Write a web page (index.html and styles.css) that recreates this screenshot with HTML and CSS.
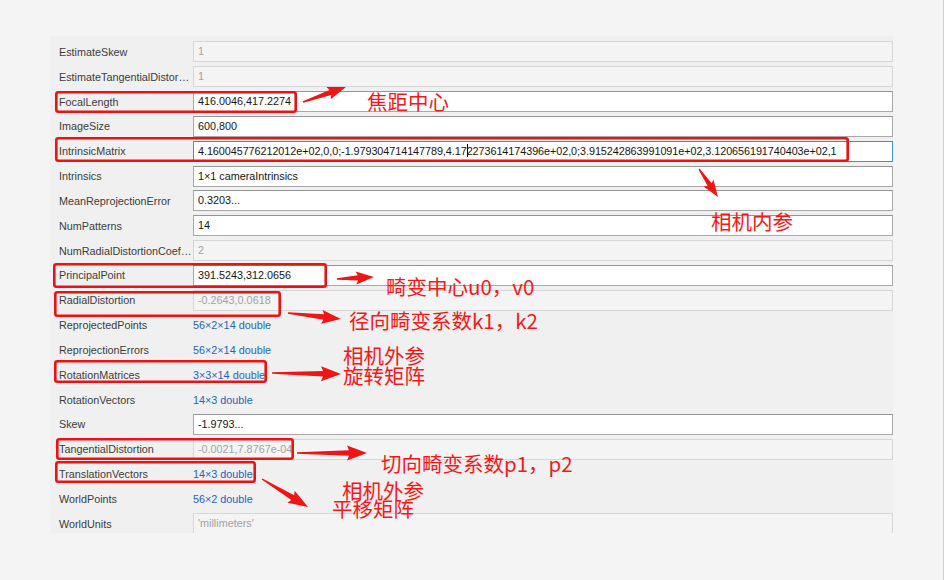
FILE: index.html
```html
<!DOCTYPE html>
<html>
<head>
<meta charset="utf-8">
<link rel="stylesheet" href="styles.css">
</head>
<body>
<div class="page">
  <div class="panel">
    <div class="row"><div class="label">EstimateSkew</div><div class="field disabled">1</div></div>
    <div class="row"><div class="label">EstimateTangentialDistor…</div><div class="field disabled">1</div></div>
    <div class="row"><div class="label">FocalLength</div><div class="field">416.0046,417.2274</div></div>
    <div class="row"><div class="label">ImageSize</div><div class="field">600,800</div></div>
    <div class="row"><div class="label">IntrinsicMatrix</div><div class="field focused">4.160045776212012e+02,0,0;-1.979304714147789,4.17<span class="caret"></span>2273614174396e+02,0;3.915242863991091e+02,3.120656191740403e+02,1</div></div>
    <div class="row"><div class="label">Intrinsics</div><div class="field">1×1 cameraIntrinsics</div></div>
    <div class="row"><div class="label">MeanReprojectionError</div><div class="field">0.3203...</div></div>
    <div class="row"><div class="label">NumPatterns</div><div class="field">14</div></div>
    <div class="row"><div class="label">NumRadialDistortionCoef…</div><div class="field disabled">2</div></div>
    <div class="row"><div class="label">PrincipalPoint</div><div class="field">391.5243,312.0656</div></div>
    <div class="row"><div class="label">RadialDistortion</div><div class="field disabled">-0.2643,0.0618</div></div>
    <div class="row"><div class="label">ReprojectedPoints</div><div class="link">56×2×14 double</div></div>
    <div class="row"><div class="label">ReprojectionErrors</div><div class="link">56×2×14 double</div></div>
    <div class="row"><div class="label">RotationMatrices</div><div class="link">3×3×14 double</div></div>
    <div class="row"><div class="label">RotationVectors</div><div class="link">14×3 double</div></div>
    <div class="row"><div class="label">Skew</div><div class="field">-1.9793...</div></div>
    <div class="row"><div class="label">TangentialDistortion</div><div class="field disabled">-0.0021,7.8767e-04</div></div>
    <div class="row"><div class="label">TranslationVectors</div><div class="link">14×3 double</div></div>
    <div class="row"><div class="label">WorldPoints</div><div class="link">56×2 double</div></div>
    <div class="row"><div class="label">WorldUnits</div><div class="field disabled">'millimeters'</div></div>
  </div>
</div>

<svg class="marks" width="944" height="580" viewBox="0 0 944 580">
  <g fill="none" stroke="#ee1111" stroke-width="2.6">
    <rect x="56.3" y="92.3" width="239.4" height="19.4" rx="2"/>
    <rect x="56.3" y="138.3" width="791.4" height="22.4" rx="2"/>
    <rect x="54.3" y="264.3" width="271.4" height="22.4" rx="2"/>
    <rect x="55.3" y="292.3" width="224.4" height="23.4" rx="2"/>
    <rect x="55.3" y="361.3" width="210.4" height="20.4" rx="2"/>
    <rect x="57.3" y="439.3" width="235.4" height="19.4" rx="2"/>
    <rect x="56.3" y="462.3" width="198.4" height="19.4" rx="2"/>
  </g>
  <g fill="#f01414">
    <polygon transform="translate(303 102) rotate(-19.2)" points="0,-0.7 29,-2.6 27,-6.5 45.5,0 27,6.5 29,2.6 0,0.7"/>
    <polygon transform="translate(699 169) rotate(55.8)" points="0,-0.7 19,-2.4 17,-6 33.8,0 17,6 19,2.4 0,0.7"/>
    <polygon transform="translate(337 279) rotate(-3.1)" points="0,-0.7 21,-2.6 19,-6.5 37,0 19,6.5 21,2.6 0,0.7"/>
    <polygon transform="translate(288 313) rotate(6.5)" points="0,-0.7 36,-2.8 34,-7 53.3,0 34,7 36,2.8 0,0.7"/>
    <polygon transform="translate(272 373) rotate(0.8)" points="0,-0.7 51,-2.8 49,-7.5 69,0 49,7.5 51,2.8 0,0.7"/>
    <polygon transform="translate(297 453) rotate(0)" points="0,-0.7 52,-2.8 50,-7.5 70,0 50,7.5 52,2.8 0,0.7"/>
    <polygon transform="translate(262 479) rotate(31.3)" points="0,-0.7 36,-2.8 34,-7 53.9,0 34,7 36,2.8 0,0.7"/>
  </g>
</svg>

<div class="notes">
  <div class="note n1">焦距中心</div>
  <div class="note n2">相机内参</div>
  <div class="note n3">畸变中心u0，v0</div>
  <div class="note n4">径向畸变系数k1，k2</div>
  <div class="note two n5">相机外参
旋转矩阵</div>
  <div class="note n7">切向畸变系数p1，p2</div>
  <div class="note two n8">相机外参
平移矩阵</div>
</div>
</body>
</html>
```

FILE: styles.css
```css
* { box-sizing: border-box; }

html, body {
  margin: 0;
  padding: 0;
}

body {
  width: 944px;
  height: 580px;
  overflow: hidden;
  position: relative;
  background: #f4f4f4;
  font-family: "Liberation Sans", Arial, sans-serif;
  font-size: 10.8px;
}

.page {
  width: 944px;
  height: 580px;
  padding: 36px 51px 0 50px;
  border-right: 1px solid #cfcfcf;
}

.panel {
  width: 843px;
  height: 497px;
  overflow: hidden;
  background: #f0f0f0;
  padding-top: 3.5px;
  display: flex;
  flex-direction: column;
}

.row {
  height: 24.84px;
  flex: none;
  display: flex;
  align-items: center;
}

.label {
  width: 143px;
  flex: none;
  padding-left: 9px;
  color: #3c3c3c;
  white-space: nowrap;
  overflow: hidden;
}

.field {
  flex: 1;
  height: 21px;
  line-height: 19px;
  padding: 0 4px;
  background: #ffffff;
  border: 1px solid #a8a8a8;
  border-top-color: #959595;
  color: #141414;
  white-space: nowrap;
  overflow: hidden;
}

.field.disabled {
  background: #f4f4f4;
  border-color: #d6d6d6;
  color: #a2a2a2;
}

.field.focused {
  border-color: #3b8fe0;
  letter-spacing: -0.05px;
}

.caret {
  display: inline-block;
  width: 1px;
  height: 13px;
  margin-right: -1px;
  background: #000;
  vertical-align: -2px;
}

.link {
  flex: 1;
  color: #1c64be;
  white-space: nowrap;
}

.marks {
  position: absolute;
  left: 0;
  top: 0;
  pointer-events: none;
}

.notes {
  position: absolute;
  left: 0;
  top: 0;
  width: 944px;
  height: 580px;
  pointer-events: none;
}

.note {
  position: absolute;
  color: #f41818;
  font-family: "Noto Sans CJK SC", "Noto Sans", sans-serif;
  font-size: 20.5px;
  line-height: 20px;
  white-space: nowrap;
}

.note.two {
  white-space: pre;
}

.n8 {
  line-height: 18px;
  text-indent: 10px;
}

.n1 { left: 367px; top: 91px; }
.n2 { left: 711px; top: 211px; }
.n3 { left: 386px; top: 276px; }
.n4 { left: 349px; top: 310px; }
.n5 { left: 343px; top: 345px; }
.n7 { left: 381px; top: 453px; }
.n8 { left: 332px; top: 481px; }
```
